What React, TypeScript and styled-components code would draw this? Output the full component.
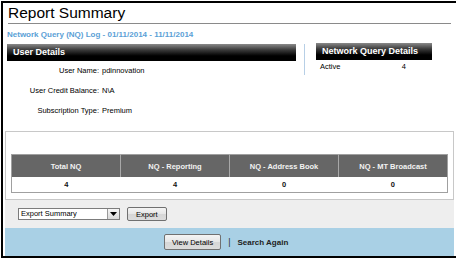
import styled, { createGlobalStyle } from "styled-components";

const GlobalStyle = createGlobalStyle`
  body {
    margin: 0;
    background: #fff;
    font-family: "Liberation Sans", Arial, sans-serif;
  }
`;

const userRows = [
  { label: "User Name:", value: "pdinnovation" },
  { label: "User Credit Balance:", value: "N\\A" },
  { label: "Subscription Type:", value: "Premium" },
];

const summaryCols = [
  { title: "Total NQ", value: "4" },
  { title: "NQ - Reporting", value: "4" },
  { title: "NQ - Address Book", value: "0" },
  { title: "NQ - MT Broadcast", value: "0" },
];

const App = () => {
  return (
    <>
      <GlobalStyle />
      <Frame>
        <Title>Report Summary</Title>
        <SubTitle>Network Query (NQ) Log - 01/11/2014 - 11/11/2014</SubTitle>

        <Details>
          <LeftCol>
            <BarHeader>User Details</BarHeader>
            <InfoList>
              {userRows.map((row) => (
                <InfoRow key={row.label}>
                  <InfoLabel>{row.label}</InfoLabel>
                  <InfoValue>{row.value}</InfoValue>
                </InfoRow>
              ))}
            </InfoList>
          </LeftCol>
          <Divider />
          <RightCol>
            <BarHeader>Network Query Details</BarHeader>
            <StatusRow>
              <span>Active</span>
              <span>4</span>
            </StatusRow>
          </RightCol>
        </Details>

        <SummaryBox>
          <SummaryTable>
            <thead>
              <tr>
                {summaryCols.map((c) => (
                  <Th key={c.title}>{c.title}</Th>
                ))}
              </tr>
            </thead>
            <tbody>
              <tr>
                {summaryCols.map((c) => (
                  <Td key={c.title}>{c.value}</Td>
                ))}
              </tr>
            </tbody>
          </SummaryTable>
        </SummaryBox>

        <ExportBar>
          <SelectBox>
            <SelectText>Export Summary</SelectText>
            <SelectArrow>
              <svg width="7" height="4" viewBox="0 0 7 4">
                <path d="M0 0h7L3.5 4z" fill="#000" />
              </svg>
            </SelectArrow>
          </SelectBox>
          <Button>Export</Button>
        </ExportBar>

        <ActionBar>
          <Button $tall>View Details</Button>
          <Pipe>|</Pipe>
          <LinkText>Search Again</LinkText>
        </ActionBar>
      </Frame>
    </>
  );
};

export default App;

const Frame = styled.div`
  margin: 1px;
  width: 449px;
  height: 253px;
  border: 2px solid #000;
  display: flex;
  flex-direction: column;
  padding: 0 2px 0 2px;
  box-sizing: content-box;
  overflow: hidden;
`;

const Title = styled.div`
  margin: 0 3px 0 3px;
  font-size: 15.5px;
  line-height: 19px;
  color: #000;
  border-bottom: 1px solid #8a8a8a;
  padding-bottom: 1px;
`;

const SubTitle = styled.div`
  margin: 6px 0 0 2px;
  font-size: 8px;
  font-weight: bold;
  color: #5b9fd6;
  line-height: 10px;
`;

const Details = styled.div`
  display: flex;
  margin-top: 4px;
  height: 87px;
  flex-shrink: 0;
`;

const LeftCol = styled.div`
  width: 289px;
  margin-left: 2px;
`;

const RightCol = styled.div`
  width: 116px;
  margin-top: -1px;
`;

const Divider = styled.div`
  width: 1px;
  height: 31px;
  background: #b7cfe6;
  margin: 0 11px 0 8px;
`;

const BarHeader = styled.div`
  height: 17px;
  line-height: 17px;
  padding-left: 6px;
  font-size: 9px;
  font-weight: bold;
  color: #fff;
  background: linear-gradient(to bottom, #8a8a8a 0%, #3a3a3a 35%, #000 70%, #000 100%);
`;

const InfoList = styled.div`
  display: flex;
  flex-direction: column;
  gap: 10px;
  margin-top: 5px;
`;

const InfoRow = styled.div`
  display: flex;
  font-size: 7.5px;
  line-height: 10px;
  color: #000;
`;

const InfoLabel = styled.span`
  width: 92px;
  text-align: right;
`;

const InfoValue = styled.span`
  margin-left: 3px;
`;

const StatusRow = styled.div`
  display: flex;
  justify-content: space-between;
  padding: 2px 26px 0 4px;
  font-size: 7.5px;
  line-height: 10px;
  color: #000;
`;

const SummaryBox = styled.div`
  height: 68px;
  flex-shrink: 0;
  border: 1px solid #c8c8c8;
  border-bottom: none;
  padding: 22px 5px 0 5px;
  box-sizing: border-box;
`;

const SummaryTable = styled.table`
  width: 100%;
  border-collapse: collapse;
  border: 1px solid #a0a0a0;
  font-size: 7.5px;
`;

const Th = styled.th`
  height: 22px;
  padding: 0;
  background: #666;
  color: #f2f2f2;
  font-weight: bold;
  border-left: 1px solid #a8a8a8;
  width: 25%;
  &:first-child {
    border-left: none;
  }
`;

const Td = styled.td`
  height: 15px;
  padding: 0;
  text-align: center;
  color: #111;
  font-weight: bold;
`;

const ExportBar = styled.div`
  height: 29px;
  flex-shrink: 0;
  background: #eeeeee;
  border-top: 1px solid #c8c8c8;
  display: flex;
  align-items: center;
  gap: 7px;
  padding-left: 13px;
  box-sizing: border-box;
`;

const SelectBox = styled.div`
  width: 102px;
  height: 12px;
  display: flex;
  border: 1px solid #7c7c7c;
  background: #fff;
  box-sizing: border-box;
`;

const SelectText = styled.div`
  flex: 1;
  font-size: 7.5px;
  line-height: 10px;
  padding-left: 2px;
  color: #000;
`;

const SelectArrow = styled.div`
  width: 11px;
  display: flex;
  align-items: center;
  justify-content: center;
  border-left: 1px solid #9a9a9a;
  background: linear-gradient(to bottom, #f6f6f6, #d8d8d8);
`;

const Button = styled.button<{ $tall?: boolean }>`
  height: ${(p) => (p.$tall ? "16px" : "14px")};
  padding: 0 ${(p) => (p.$tall ? "7px" : "8px")};
  font-family: "Liberation Sans", Arial, sans-serif;
  font-size: 7.5px;
  color: #000;
  border: 1px solid #707070;
  border-radius: 2px;
  background: linear-gradient(to bottom, #f4f4f4 0%, #e6e6e6 50%, #d6d6d6 51%, #dcdcdc 100%);
  cursor: pointer;
`;

const ActionBar = styled.div`
  height: 28px;
  flex-shrink: 0;
  background: #a9d0e5;
  display: flex;
  align-items: center;
  padding-left: 159px;
  box-sizing: border-box;
`;

const Pipe = styled.span`
  margin: 0 7px 0 7px;
  font-size: 9px;
  color: #333;
`;

const LinkText = styled.span`
  font-size: 8px;
  font-weight: bold;
  color: #222;
`;
